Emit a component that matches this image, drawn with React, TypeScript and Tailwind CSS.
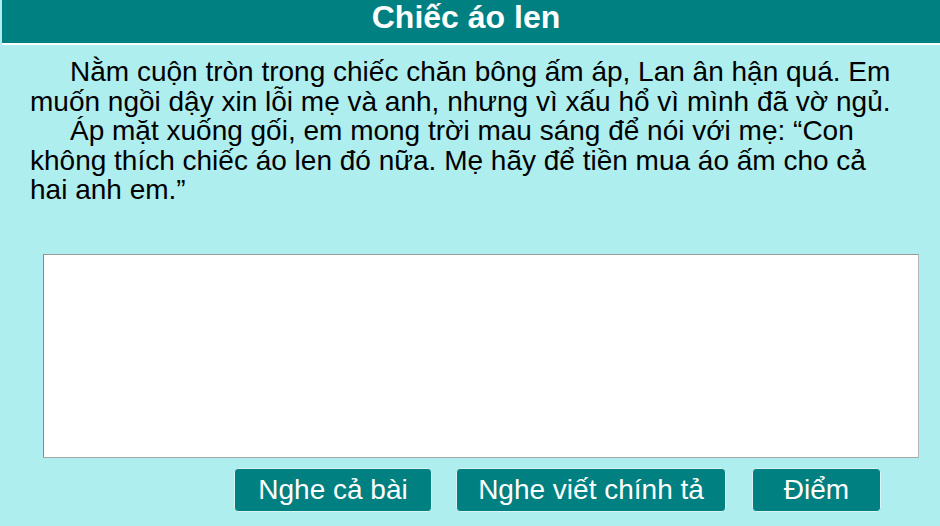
export default function App() {
  const font = { fontFamily: '"Liberation Sans", Arial, sans-serif' };
  return (
    <div className="w-[940px] h-[526px] bg-[#afeeee] overflow-hidden" style={font}>
      <div className="ml-[2px] h-[45px] bg-[#008080] border-b-2 border-white flex justify-center pt-[1px] pr-[10px]">
        <h1 className="text-white font-bold text-[32px] leading-none">Chiếc áo len</h1>
      </div>

      <div className="pl-[30px] pr-[40px] pt-[12px] text-[28px] leading-[29.5px] text-black">
        <p className="indent-[40px]">
          Nằm cuộn tròn trong chiếc chăn bông ấm áp, Lan ân hận quá. Em muốn ngồi dậy xin lỗi mẹ và anh, nhưng vì xấu hổ vì mình đã vờ ngủ.
        </p>
        <p className="indent-[40px]">
          Áp mặt xuống gối, em mong trời mau sáng để nói với mẹ: “Con không thích chiếc áo len đó nữa. Mẹ hãy để tiền mua áo ấm cho cả hai anh em.”
        </p>
      </div>

      <div className="pl-[43px] pt-[49px]">
        <textarea
          className="block w-[876px] h-[204px] bg-white resize-none outline-none border border-t-[#9a9a9a] border-l-[#8a8a8a] border-r-[#b8b8b8] border-b-[#a8a8a8]"
        />
      </div>

      <div className="flex pl-[234px] pt-[10px] gap-[24px]">
        <button className="w-[198px] h-[44px] bg-[#008080] text-white text-[28px] rounded-[4px] border border-[#d8f4f4]">
          Nghe cả bài
        </button>
        <button className="w-[270px] h-[44px] bg-[#008080] text-white text-[28px] rounded-[4px] border border-[#d8f4f4]">
          Nghe viết chính tả
        </button>
        <button className="w-[129px] h-[44px] bg-[#008080] text-white text-[28px] rounded-[4px] border border-[#d8f4f4] ml-[2px]">
          Điểm
        </button>
      </div>
    </div>
  );
}
